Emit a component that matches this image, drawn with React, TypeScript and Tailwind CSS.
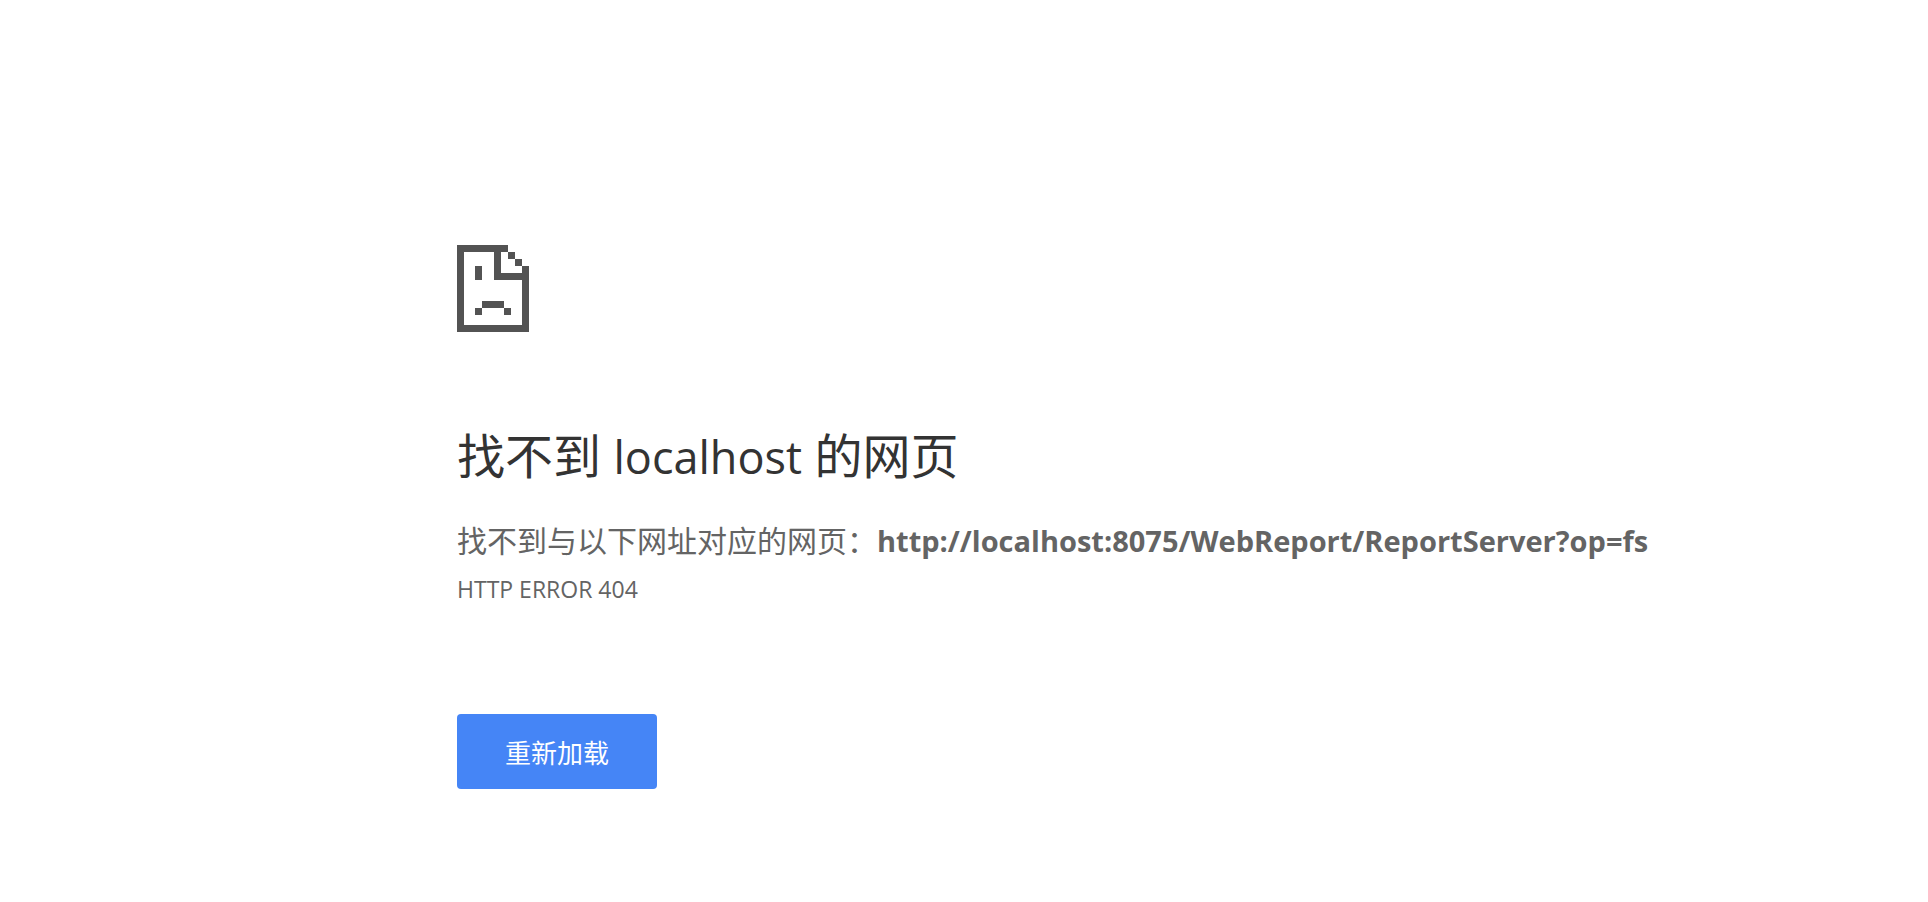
import React from 'react';

function SadPageIcon() {
  return (
    <svg
      width="72"
      height="87"
      viewBox="0 0 72 87"
      fill="#535353"
      shapeRendering="crispEdges"
      aria-hidden="true"
      className="block"
    >
      {/* sheet outline */}
      <path d="M0 0H51V7H7V80H65V21H72V87H0Z" />
      {/* folded corner */}
      <path d="M37 7H44V28H65V35H37Z" />
      <path d="M51 7H58V14H51Z" />
      <path d="M58 14H65V21H58Z" />
      {/* face */}
      <path d="M18 21H25V35H18Z" />
      <path d="M25 56H47V63H25Z" />
      <path d="M18 63H25V70H18Z" />
      <path d="M47 63H54V70H47Z" />
    </svg>
  );
}

export default function App() {
  const url = 'http://localhost:8075/WebReport/ReportServer?op=fs';

  return (
    <div className="min-h-screen bg-white px-6 pt-[245px] pb-12 font-['Open_Sans','Noto_Sans_CJK_SC',sans-serif] text-[#646464]">
      <main className="mx-auto max-w-[1014px]">
        <SadPageIcon />
        <h1 className="mt-[92px] text-[48px] leading-[64px] text-[#333333]">
          找不到 <span className="text-[45px]">localhost</span> 的网页
        </h1>
        <p className="mt-[30px] whitespace-nowrap text-[30px] leading-[44px]">
          找不到与以下网址对应的网页：<strong className="text-[29px] font-bold">{url}</strong>
        </p>
        <div className="mt-2 text-[23px] leading-9">HTTP ERROR 404</div>
        <button
          type="button"
          onClick={() => window.location.reload()}
          className="mt-[107px] h-[75px] w-[200px] cursor-pointer rounded bg-[#4585f6] pt-1 text-[26px] text-white"
        >
          重新加载
        </button>
      </main>
    </div>
  );
}
